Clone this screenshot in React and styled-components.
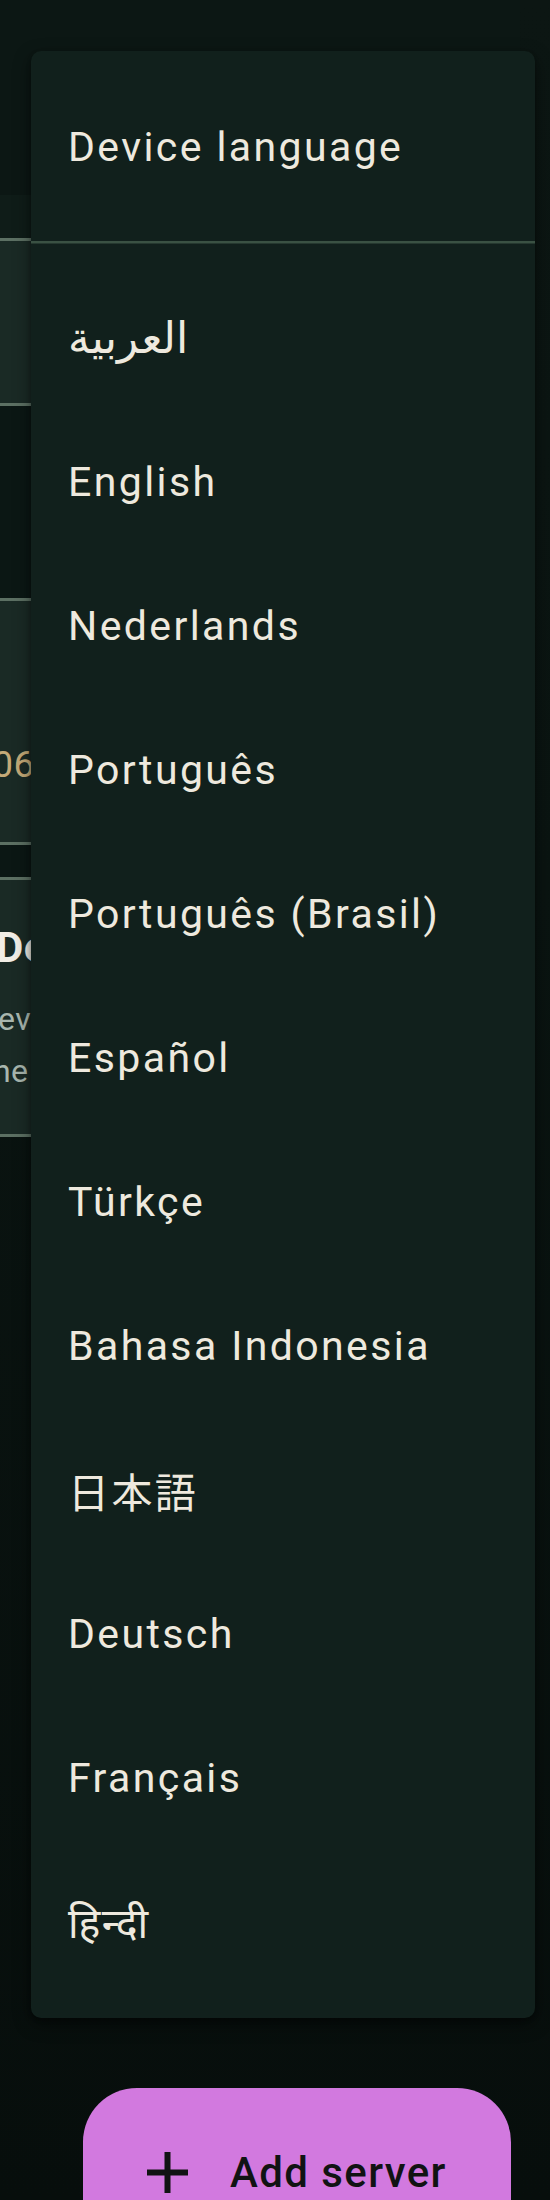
import React from 'react';
import styled, { createGlobalStyle } from 'styled-components';

const languages = [
  { label: 'العربية', script: 'arabic' },
  { label: 'English' },
  { label: 'Nederlands' },
  { label: 'Português' },
  { label: 'Português (Brasil)' },
  { label: 'Español' },
  { label: 'Türkçe' },
  { label: 'Bahasa Indonesia' },
  { label: '日本語' },
  { label: 'Deutsch' },
  { label: 'Français' },
  { label: 'हिन्दी', script: 'deva' },
];

const GlobalStyle = createGlobalStyle`
  html, body {
    margin: 0;
    padding: 0;
    background: #0a1310;
  }
  body {
    font-family: Roboto, "Noto Sans", "DejaVu Sans", "Noto Sans CJK JP", sans-serif;
    overflow: hidden;
  }
`;

const Screen = styled.div`
  position: relative;
  width: 550px;
  height: 2200px;
  overflow: hidden;
  background: linear-gradient(180deg, #0c1613 0%, #0a1411 40%, #070e0c 100%);
`;

/* the settings page that sits behind the open menu */
const Behind = styled.div`
  display: flex;
  flex-direction: column;
  width: 520px;
`;

const TopBar = styled.div`
  height: 195px;
  background: #0c1714;
`;

const SubBar = styled.div`
  height: 43px;
  background: #0f1c18;
`;

const Rule = styled.div`
  height: 3px;
  background: #5c7063;
`;

const Block = styled.div`
  height: ${(p) => p.$h}px;
  padding-top: ${(p) => p.$pad || 0}px;
  box-sizing: border-box;
  background: ${(p) => (p.$panel ? '#1a2a25' : '#0b1714')};
  display: flex;
  flex-direction: column;
  overflow: hidden;
`;

const Sliver = styled.div`
  white-space: nowrap;
  margin-left: ${(p) => p.$shift}px;
  margin-top: ${(p) => p.$gap || 0}px;
  font-size: ${(p) => p.$size}px;
  line-height: ${(p) => p.$lh}px;
  font-weight: ${(p) => (p.$bold ? 700 : 400)};
  color: ${(p) => p.$color};
  letter-spacing: 0.5px;
`;

/* dropdown menu */
const Menu = styled.div`
  position: absolute;
  top: 51px;
  left: 31px;
  width: 504px;
  padding: 24px 0;
  box-sizing: border-box;
  background: #11201c;
  border-radius: 10px;
  box-shadow: 0 6px 18px rgba(0, 0, 0, 0.45), 0 2px 4px rgba(0, 0, 0, 0.3);
  display: flex;
  flex-direction: column;
`;

const MenuItem = styled.div`
  height: 144px;
  display: flex;
  align-items: center;
  padding-left: 37px;
  font-size: ${(p) => (p.$script === 'arabic' ? 44 : 41)}px;
  letter-spacing: ${(p) =>
    p.$script === 'arabic' ? '0' : p.$script === 'deva' ? '1.3px' : '2.4px'};
  color: #eee9de;
  white-space: nowrap;
`;

const Divider = styled.div`
  height: 3px;
  margin: 22px 0;
  background: #3a5143;
  border-bottom: 1px solid #25382f;
  box-sizing: border-box;
`;

/* extended floating action button */
const Fab = styled.button`
  position: absolute;
  top: 2088px;
  left: 83px;
  width: 428px;
  height: 168px;
  border: none;
  border-radius: 54px;
  background: #d279df;
  display: flex;
  align-items: center;
  gap: 42px;
  padding: 0 0 0 64px;
  box-sizing: border-box;
  font-family: Roboto, sans-serif;
  font-size: 42px;
  font-weight: 500;
  letter-spacing: 1.4px;
  color: #111313;
  cursor: pointer;
`;

const PlusIcon = () => (
  <svg width="41" height="41" viewBox="0 0 41 41">
    <path d="M20.5 0v41M0 20.5h41" stroke="#111313" strokeWidth="6" fill="none" />
  </svg>
);

const App = () => {
  return (
    <>
      <GlobalStyle />
      <Screen>
        <Behind>
          <TopBar />
          <SubBar />
          <Rule />
          <Block $panel $h={162} />
          <Rule />
          <Block $h={192} />
          <Rule />
          <Block $panel $h={241} $pad={140}>
            <Sliver $shift={-29} $size={37} $lh={48} $color="#c4aa78">106</Sliver>
          </Block>
          <Rule />
          <Block $h={32} />
          <Rule />
          <Block $panel $h={254} $pad={40}>
            <Sliver $shift={-4} $size={42} $lh={56} $bold $color="#f2eee6">Debug logging</Sliver>
            <Sliver $shift={-2} $gap={17} $size={32} $lh={52} $color="#a8b6ae">every request</Sliver>
            <Sliver $shift={-18} $size={32} $lh={52} $color="#a8b6ae">the server</Sliver>
          </Block>
          <Rule />
        </Behind>

        <Menu>
          <MenuItem>Device language</MenuItem>
          <Divider />
          {languages.map((lang) => (
            <MenuItem key={lang.label} $script={lang.script}>
              {lang.label}
            </MenuItem>
          ))}
        </Menu>

        <Fab>
          <PlusIcon />
          Add server
        </Fab>
      </Screen>
    </>
  );
};

export default App;
